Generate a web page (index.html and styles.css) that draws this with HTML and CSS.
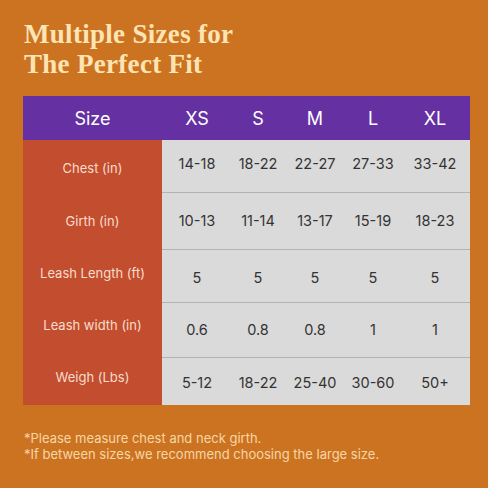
FILE: index.html
```html
<!DOCTYPE HTML>
<html>
<head>
<meta charset="UTF-8">
<title>Size chart</title>
<link rel="stylesheet" href="styles.css">
</head>
<body>
<div class="page">
    <h1 class="title">Multiple Sizes for<br>The Perfect Fit</h1>
    <table class="chart">
        <thead>
            <tr><th class="lab">Size</th><th>XS</th><th>S</th><th>M</th><th>L</th><th>XL</th></tr>
        </thead>
        <tbody>
            <tr class="r1"><td class="lab">Chest (in)</td><td>14-18</td><td>18-22</td><td>22-27</td><td>27-33</td><td>33-42</td></tr>
            <tr class="r2"><td class="lab">Girth (in)</td><td>10-13</td><td>11-14</td><td>13-17</td><td>15-19</td><td>18-23</td></tr>
            <tr class="r3"><td class="lab">Leash Length (ft)</td><td>5</td><td>5</td><td>5</td><td>5</td><td>5</td></tr>
            <tr class="r4"><td class="lab">Leash width (in)</td><td>0.6</td><td>0.8</td><td>0.8</td><td>1</td><td>1</td></tr>
            <tr class="r5"><td class="lab">Weigh (Lbs)</td><td>5-12</td><td>18-22</td><td>25-40</td><td>30-60</td><td>50+</td></tr>
        </tbody>
    </table>
    <p class="note">*Please measure chest and neck girth.<br>*If between sizes,we recommend choosing the large size.</p>
</div>
</body>
</html>
```

FILE: styles.css
```css
*{margin: 0;padding: 0;}
html,body{width: 488px;height: 488px;background: #cc7322;overflow: hidden;}
.page{padding: 19px 18px 0 23px;}
.title{font-family: "Liberation Serif", serif;font-weight: bold;font-size: 27px;line-height: 30px;letter-spacing: 0.3px;color: #fde4b4;padding-left: 1px;}
.chart{margin-top: 17px;width: 447px;border-collapse: collapse;table-layout: fixed;font-family: Inter, "Liberation Sans", sans-serif;}
.chart thead tr{height: 44px;}
.chart th{background: #6531a2;color: #fff;font-weight: normal;font-size: 18px;text-align: center;padding: 0;}
.chart th:nth-child(1){width: 139px;}
.chart th:nth-child(2){width: 70px;}
.chart th:nth-child(3){width: 52px;}
.chart th:nth-child(4){width: 62px;}
.chart th:nth-child(5){width: 54px;}
.chart th:nth-child(6){width: 70px;}
.chart td{background: #dadada;color: #333;font-size: 14.5px;text-align: center;border-bottom: 1px solid #b3b3b3;padding: 0;}
.chart td.lab{background: #c24e2f;color: #f8dccb;font-size: 13px;border-bottom: none;}
.chart tr:last-child td{border-bottom: none;}
.r1{height: 52px;}
.r2{height: 57px;}
.r3{height: 53px;}
.r4{height: 55px;}
.r5{height: 48px;}
.r1 td{padding-bottom: 4px;}
.r1 td.lab{padding: 4px 0 0;}
.r3 td{padding-top: 4px;}
.r3 td.lab{padding: 0 0 6px;}
.r4 td.lab{padding: 0 0 10px;}
.r5 td{padding-top: 2px;}
.r5 td.lab{padding: 0 0 8px;}
.note{margin-top: 25px;font-family: Inter, "Liberation Sans", sans-serif;font-size: 13px;line-height: 16px;color: #f7d6a4;padding-left: 1px;}
```
